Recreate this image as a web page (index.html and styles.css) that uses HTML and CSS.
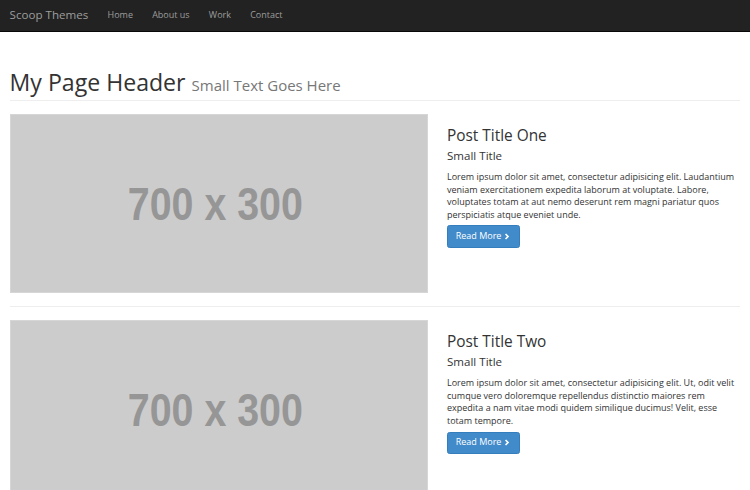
FILE: index.html
```html
<!DOCTYPE html>
<html>
<head>
<meta charset="utf-8">
<title>Scoop Themes</title>
<link rel="stylesheet" href="styles.css">
</head>
<body>
<nav class="navbar">
  <a class="brand" href="#">Scoop Themes</a>
  <ul class="nav">
    <li><a href="#">Home</a></li>
    <li><a href="#">About us</a></li>
    <li><a href="#">Work</a></li>
    <li><a href="#">Contact</a></li>
  </ul>
</nav>
<main class="container">
  <div class="page-header">
    <h1>My Page Header <small>Small Text Goes Here</small></h1>
  </div>

  <div class="row">
    <div class="col-img">
      <a class="placeholder" href="#"><span>700 x 300</span></a>
    </div>
    <div class="col-text">
      <h3>Post Title One</h3>
      <h4>Small Title</h4>
      <p>Lorem ipsum dolor sit amet, consectetur adipisicing elit. Laudantium veniam exercitationem expedita laborum at voluptate. Labore, voluptates totam at aut nemo deserunt rem magni pariatur quos perspiciatis atque eveniet unde.</p>
      <a class="btn" href="#">Read More <svg class="chev" viewBox="0 0 10 10" width="7" height="7"><path d="M3 0.6 L7.4 5 L3 9.4 L1.4 7.8 L4.2 5 L1.4 2.2 Z" fill="#fff"/></svg></a>
    </div>
  </div>

  <hr>

  <div class="row">
    <div class="col-img">
      <a class="placeholder" href="#"><span>700 x 300</span></a>
    </div>
    <div class="col-text">
      <h3>Post Title Two</h3>
      <h4>Small Title</h4>
      <p>Lorem ipsum dolor sit amet, consectetur adipisicing elit. Ut, odit velit cumque vero doloremque repellendus distinctio maiores rem expedita a nam vitae modi quidem similique ducimus! Velit, esse totam tempore.</p>
      <a class="btn" href="#">Read More <svg class="chev" viewBox="0 0 10 10" width="7" height="7"><path d="M3 0.6 L7.4 5 L3 9.4 L1.4 7.8 L4.2 5 L1.4 2.2 Z" fill="#fff"/></svg></a>
    </div>
  </div>
</main>
</body>
</html>
```

FILE: styles.css
```css
* { box-sizing: border-box; }
html, body { margin: 0; padding: 0; }
body {
  font-family: "Open Sans", "Liberation Sans", sans-serif;
  font-size: 9px;
  line-height: 12.84px;
  color: #333;
  background: #fff;
}
a { text-decoration: none; }

.navbar {
  display: flex;
  align-items: center;
  height: 32px;
  background: #222;
  border-bottom: 1px solid #080808;
}
.brand {
  padding: 0 9.6px;
  font-size: 11.6px;
  line-height: 12.8px;
  color: #9d9d9d;
}
.nav {
  display: flex;
  list-style: none;
  margin: 0;
  padding: 0;
}
.nav a {
  display: block;
  padding: 0 9.6px;
  font-size: 9px;
  line-height: 12.84px;
  color: #9d9d9d;
}

.container {
  padding: 0 9.6px;
}
.page-header {
  margin: 37.8px 0 12.8px;
  padding-bottom: 4.8px;
  border-bottom: 1px solid #eee;
}
h1 {
  margin: 0;
  font-size: 23.1px;
  line-height: 1.1;
  font-weight: 400;
  color: #333;
}
h1 small {
  font-size: 65%;
  color: #777;
  font-weight: 400;
}

.row {
  display: flex;
  margin: 0 -9.6px;
}
.col-img {
  width: 438px;
  padding: 0 9.6px;
}
.col-text {
  width: 313px;
  padding: 0 9.6px;
}
.placeholder {
  display: flex;
  align-items: center;
  justify-content: center;
  height: 179.6px;
  background: #cccccc;
  border: 1px solid #d6d6d6;
}
.placeholder span {
  display: inline-block;
  font-family: "Liberation Sans", Arial, sans-serif;
  font-weight: 700;
  font-size: 46px;
  line-height: 1;
  color: #969696;
  transform: scaleX(0.855);
  margin-right: 7px;
}

h3 {
  margin: 13.8px 0 4.4px;
  font-size: 15.4px;
  line-height: 1.1;
  font-weight: 400;
  color: #333;
}
h4 {
  margin: 5.4px 0 8.4px;
  font-size: 11.56px;
  line-height: 1.1;
  font-weight: 400;
  color: #333;
}
p {
  margin: 0 0 4.4px;
  line-height: 12.5px;
}
.btn {
  display: inline-flex;
  align-items: center;
  gap: 3px;
  padding: 3.85px 7.7px;
  font-size: 9px;
  line-height: 12.84px;
  color: #fff;
  background: #428bca;
  border: 1px solid #357ebd;
  border-radius: 2.5px;
}
.chev { display: block; }

hr {
  margin: 12.8px 0;
  border: 0;
  border-top: 1px solid #eee;
}
```
